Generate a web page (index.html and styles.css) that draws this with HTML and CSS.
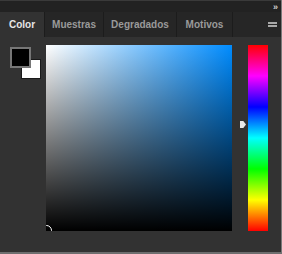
FILE: index.html
```html
<!DOCTYPE html>
<html lang="es">
<head>
    <meta charset="UTF-8">
    <title>Color</title>
    <link rel="stylesheet" href="styles.css">
</head>
<body>
    <div class="panel">
        <div class="topbar">
            <span class="collapse">&raquo;</span>
        </div>
        <div class="tabs">
            <div class="tab active tab-color">Color</div>
            <div class="tab tab-muestras">Muestras</div>
            <div class="tab tab-degradados">Degradados</div>
            <div class="tab tab-motivos">Motivos</div>
            <div class="tab-fill">
                <span class="menu-icon"></span>
            </div>
        </div>
        <div class="content">
            <div class="swatches">
                <div class="swatch bg"></div>
                <div class="swatch fg"></div>
            </div>
            <div class="field">
                <span class="picker"></span>
            </div>
            <div class="slider-wrap">
                <span class="slider-marker"></span>
                <div class="slider"></div>
            </div>
        </div>
    </div>
</body>
</html>
```

FILE: styles.css
```css
* {
    box-sizing: border-box;
    margin: 0;
    padding: 0;
}

body {
    font-family: "Liberation Sans", Arial, sans-serif;
    background-color: #323232;
    width: 282px;
    height: 254px;
    overflow: hidden;
}

.panel {
    width: 282px;
    height: 254px;
    background-color: #323232;
    border-right: 1px solid #7a7a7a;
    border-bottom: 2px solid #6e6e6e;
    display: flex;
    flex-direction: column;
}

/* barra superior */
.topbar {
    height: 12px;
    background-color: #222;
    border-top: 1px solid #3a3a3a;
    display: flex;
    justify-content: flex-end;
    align-items: center;
    padding-right: 3px;
}

.collapse {
    color: #cfcfcf;
    font-size: 9px;
    line-height: 8px;
    font-weight: bold;
}

/* pestañas */
.tabs {
    height: 25px;
    display: flex;
    background-color: #262626;
}

.tab {
    height: 25px;
    display: flex;
    align-items: center;
    justify-content: center;
    font-size: 10px;
    font-weight: bold;
    color: #9a9a9a;
    border-right: 1px solid #1c1c1c;
}

.tab.active {
    background-color: #323232;
    color: #e6e6e6;
}

.tab-color { width: 45px; }
.tab-muestras { width: 59px; }
.tab-degradados { width: 73px; }
.tab-motivos { width: 56px; }

.tab-fill {
    flex: 1;
    display: flex;
    justify-content: flex-end;
    align-items: center;
    padding-right: 4px;
}

.menu-icon {
    width: 9px;
    height: 5px;
    border-top: 2px solid #a8a8a8;
    border-bottom: 2px solid #a8a8a8;
}

/* contenido */
.content {
    flex: 1;
    display: flex;
    padding: 8px 0 0 10px;
}

.swatches {
    position: relative;
    width: 36px;
    height: 34px;
    margin-top: 2px;
}

.swatch {
    position: absolute;
    width: 20px;
    height: 20px;
}

.swatch.fg {
    left: 0;
    top: 0;
    width: 21px;
    height: 21px;
    background-color: #000;
    border: 2px solid #767676;
}

.swatch.bg {
    left: 11px;
    top: 12px;
    background-color: #fff;
    border: 1px solid #1a1a1a;
}

.field {
    position: relative;
    width: 186px;
    height: 186px;
    overflow: hidden;
    background:
        linear-gradient(to top, #000, rgba(0, 0, 0, 0)),
        linear-gradient(to right, #fff, rgb(0, 140, 255));
}

.picker {
    position: absolute;
    left: -5px;
    bottom: -5px;
    width: 11px;
    height: 11px;
    border-radius: 50%;
    border: 1px solid #fff;
}

.slider-wrap {
    display: flex;
    align-items: flex-start;
    margin-left: 8px;
}

.slider-marker {
    width: 6px;
    height: 7px;
    margin-top: 76px;
    margin-right: 2px;
    background-color: #e8e8e8;
    clip-path: polygon(0 0, 55% 0, 100% 50%, 55% 100%, 0 100%);
}

.slider {
    width: 20px;
    height: 186px;
    background: linear-gradient(to bottom,
        #ff0000 0%,
        #ff00ff 16.67%,
        #0000ff 33.33%,
        #00ffff 50%,
        #00ff00 66.67%,
        #ffff00 83.33%,
        #ff0000 100%);
}
```
